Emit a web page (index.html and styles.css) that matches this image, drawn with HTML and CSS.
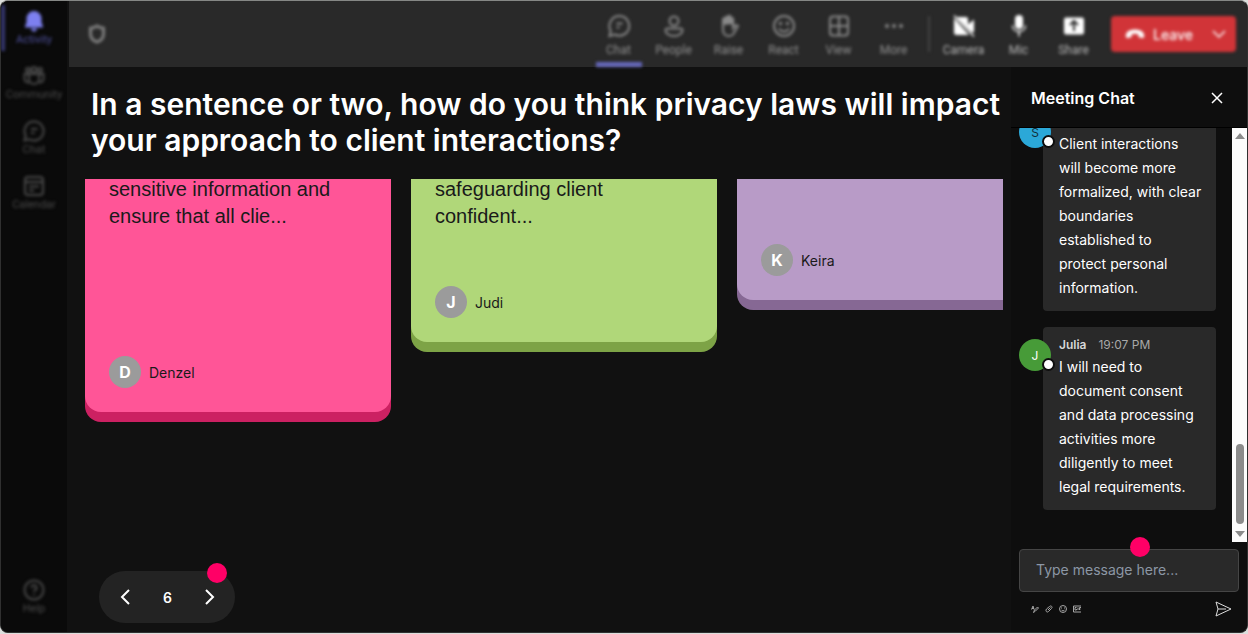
FILE: index.html
```html
<!DOCTYPE html>
<html lang="en">
<head>
  <meta charset="utf-8">
  <title>Meeting</title>
  <link rel="stylesheet" href="styles.css">
</head>
<body>
  <div class="window">
    <nav class="sidebar">
      <a class="nav-item active" href="#">
        <svg width="24" height="24" viewBox="0 0 24 24" fill="currentColor"><path d="M12 2a7.500 7.500 0 0 0-7.500 7.500v4L3 17.200c-.3.800.2 1.300.9 1.300h16.200c.7 0 1.200-.5.900-1.300l-1.500-3.700v-4A7.500 7.500 0 0 0 12 2zM9 19.500a3 3 0 0 0 6 0z"/></svg>
        <span>Activity</span>
      </a>
      <a class="nav-item" href="#">
        <svg width="24" height="24" viewBox="0 0 24 24" fill="none" stroke="currentColor" stroke-width="2"><circle cx="6" cy="6" r="2"/><circle cx="12" cy="5.500" r="2.500"/><circle cx="18" cy="6" r="2"/><path d="M7 10h10v5a5 5 0 0 1-10 0zM7 10H2.500v4.500A4 4 0 0 0 7 18.500M17 10h4.500v4.500a4 4 0 0 1-4.500 4"/></svg>
        <span>Community</span>
      </a>
      <a class="nav-item" href="#">
        <svg width="24" height="24" viewBox="0 0 24 24" fill="none" stroke="currentColor" stroke-width="2"><path d="M12 2.500a9.500 9.500 0 1 1-4.600 17.800L2.500 21.500l1.200-4.900A9.500 9.500 0 0 1 12 2.500zM9 10h6.500M9 14h3.500"/></svg>
        <span>Chat</span>
      </a>
      <a class="nav-item" href="#">
        <svg width="24" height="24" viewBox="0 0 24 24" fill="none" stroke="currentColor" stroke-width="2"><rect x="3" y="3" width="18" height="18" rx="3"/><path d="M3 8h18M7 12.500h10M7 16.500h5"/></svg>
        <span>Calendar</span>
      </a>
      <a class="nav-item help" href="#">
        <svg width="24" height="24" viewBox="0 0 24 24" fill="none" stroke="currentColor" stroke-width="2"><circle cx="12" cy="12" r="9.500"/><path d="M9.500 9.800a2.500 2.500 0 1 1 3.700 2.200c-.8.500-1.200 1-1.200 2M12 16v1.500"/></svg>
        <span>Help</span>
      </a>
    </nav>

    <div class="content">
      <header class="topbar">
        <div class="topbar-inner">
          <svg class="shield" width="20" height="22" viewBox="0 0 20 22" fill="none" stroke="currentColor" stroke-width="3"><path d="M10 3c2 1.300 4 2 6.500 2.200V11c0 4-2.700 6.700-6.500 8-3.800-1.300-6.500-4-6.500-8V5.200C6 5 8 4.300 10 3z"/></svg>
          <div class="tools">
            <button class="tool selected">
              <svg width="24" height="24" viewBox="0 0 24 24" fill="none" stroke="currentColor" stroke-width="2"><path d="M12.500 2a9.800 9.800 0 1 1-4.600 18.500L2.500 22l1.200-5.100A10 10 0 0 1 12.500 2zM9.500 9.500h6M9.500 13.500h3"/></svg>
              <span>Chat</span>
            </button>
            <button class="tool">
              <svg width="24" height="24" viewBox="0 0 24 24" fill="none" stroke="currentColor" stroke-width="2"><circle cx="12" cy="7" r="4.500"/><path d="M5.500 14.500h13c1.200 0 2 .8 2 1.800 0 3-3.500 5.700-8.500 5.700s-8.500-2.700-8.500-5.700c0-1 .8-1.800 2-1.800z"/></svg>
              <span>People</span>
            </button>
            <button class="tool">
              <svg width="24" height="24" viewBox="0 0 24 24" fill="none" stroke="currentColor" stroke-width="2"><path fill="currentColor" d="M6 10V5.500a1.200 1.200 0 0 1 2.500 0V4a1.300 1.300 0 0 1 2.600 0V3a1.300 1.300 0 0 1 2.600 0v2a1.300 1.300 0 0 1 2.500 0v4z"/><path d="M6 10v5.500c0 4 2.500 6.500 6 6.500 3 0 4.500-1.500 5.500-4l3.500-6c-1.500-1.500-3.500-.5-5 2V5"/></svg>
              <span>Raise</span>
            </button>
            <button class="tool">
              <svg width="24" height="24" viewBox="0 0 24 24" fill="none" stroke="currentColor" stroke-width="2"><circle cx="12" cy="12" r="10"/><path d="M7 14.500c2.500 4 7.500 4 10 0"/><circle cx="8.500" cy="9.500" r=".8"/><circle cx="15.500" cy="9.500" r=".8"/></svg>
              <span>React</span>
            </button>
            <button class="tool">
              <svg width="24" height="24" viewBox="0 0 24 24" fill="none" stroke="currentColor" stroke-width="2"><rect x="3" y="2.500" width="18" height="19" rx="3"/><path d="M12 2.500v19M3 12h18"/></svg>
              <span>View</span>
            </button>
            <button class="tool">
              <svg width="24" height="24" viewBox="0 0 24 24" fill="currentColor"><circle cx="5" cy="12" r="2"/><circle cx="12" cy="12" r="2"/><circle cx="19" cy="12" r="2"/></svg>
              <span>More</span>
            </button>
          </div>
          <div class="tools devices">
            <button class="tool">
              <svg width="24" height="24" viewBox="0 0 24 24" fill="currentColor"><path d="M5 3h9a2 2 0 0 1 2 2v5.500l6-5V18l-2 .5L5 3.500zM2 4l15 17H4.500A2.500 2.500 0 0 1 2 18.500z"/><path stroke="currentColor" stroke-width="1.500" d="M2 1.500l20 21"/></svg>
              <span>Camera</span>
            </button>
            <button class="tool">
              <svg width="24" height="24" viewBox="0 0 24 24" fill="currentColor"><rect x="8" y="1" width="8" height="14" rx="4"/><path fill="none" stroke="currentColor" stroke-width="1.500" d="M5.500 11.500c0 8 13 8 13 0M12 18v4.500"/></svg>
              <span>Mic</span>
            </button>
            <button class="tool">
              <svg width="24" height="24" viewBox="0 0 24 24"><rect x="2" y="3.500" width="20" height="17" rx="2" fill="currentColor"/><path fill="none" stroke="#292929" stroke-width="2" d="M12 17V7.500M8 11l4-4 4 4"/></svg>
              <span>Share</span>
            </button>
          </div>
          <button class="leave">
            <svg width="20" height="20" viewBox="0 0 20 20" fill="currentColor"><path d="M.8 11.500C1 7.500 5 5.500 10 5.500s9 2 9.200 6c.1 2-.7 2.700-2 2.500l-2.500-.5c-1-.2-1.400-.8-1.400-1.700v-1.500a10 10 0 0 0-6.600 0v1.500c0 .9-.4 1.500-1.400 1.700L2.800 14c-1.300.2-2.100-.5-2-2.500z"/></svg>
            <span>Leave</span>
            <svg class="chevron" width="14" height="14" viewBox="0 0 14 14" fill="none" stroke="currentColor" stroke-width="1.500"><path d="M1 4l6 6 6-6"/></svg>
          </button>
        </div>
      </header>

      <div class="panes">
        <main class="stage">
          <h1>In a sentence or two, how do you think privacy laws will impact your approach to client interactions?</h1>
          <div class="board">
            <article class="card pink">
              <p>sensitive information and ensure that all clie...</p>
              <div class="author"><span class="initial">D</span>Denzel</div>
            </article>
            <article class="card green">
              <p>safeguarding client confident...</p>
              <div class="author"><span class="initial">J</span>Judi</div>
            </article>
            <article class="card purple">
              <div class="author"><span class="initial">K</span>Keira</div>
            </article>
          </div>
          <div class="pager">
            <button aria-label="Previous"><svg width="12" height="18" viewBox="0 0 12 18" fill="none" stroke="currentColor" stroke-width="2"><path d="M10 2L3 9l7 7"/></svg></button>
            <span class="page">6</span>
            <button aria-label="Next"><svg width="12" height="18" viewBox="0 0 12 18" fill="none" stroke="currentColor" stroke-width="2"><path d="M2 2l7 7-7 7"/></svg></button>
            <span class="hotspot"></span>
          </div>
        </main>

        <aside class="chat">
          <header class="chat-header">
            <h2>Meeting Chat</h2>
            <button aria-label="Close"><svg width="14" height="14" viewBox="0 0 14 14" fill="none" stroke="currentColor" stroke-width="1.500"><path d="M2 2l10 10M12 2L2 12"/></svg></button>
          </header>
          <div class="chat-body">
            <div class="messages">
              <div class="message">
                <span class="avatar blue">S</span>
                <div class="bubble">
                  <div class="meta"></div>
                  <p>Client interactions will become more formalized, with clear boundaries established to protect personal information.</p>
                </div>
              </div>
              <div class="message">
                <span class="avatar leaf">J</span>
                <div class="bubble">
                  <div class="meta"><b>Julia</b><time>19:07 PM</time></div>
                  <p>I will need to document consent and data processing activities more diligently to meet legal requirements.</p>
                </div>
              </div>
            </div>
            <div class="scrollbar">
              <svg width="10" height="6" viewBox="0 0 10 6"><path fill="#8b8b8b" d="M5 0l5 6H0z"/></svg>
              <span class="thumb"></span>
              <svg width="10" height="6" viewBox="0 0 10 6"><path fill="#8b8b8b" d="M0 0h10L5 6z"/></svg>
            </div>
          </div>
          <form class="composer">
            <div class="field">
              <input type="text" aria-label="Message" placeholder="Type message here...">
              <span class="hotspot"></span>
            </div>
            <div class="actions">
              <button type="button" aria-label="Format"><svg width="8" height="8" viewBox="0 0 16 16" fill="none" stroke="currentColor" stroke-width="2"><path d="M1 9l3-7 2 7M2 7h4M5 15l2-5 6-6 2 2-6 6z"/></svg></button>
              <button type="button" aria-label="Attach"><svg width="8" height="8" viewBox="0 0 16 16" fill="none" stroke="currentColor" stroke-width="2"><path d="M3 8l6-5c3-3 7 1 4 4l-6 6c-3 3-7-1-4-5zM6 10l5-5"/></svg></button>
              <button type="button" aria-label="Emoji"><svg width="8" height="8" viewBox="0 0 16 16" fill="none" stroke="currentColor" stroke-width="2"><circle cx="8" cy="8" r="7"/><path d="M4.500 9.500c2 3 5 3 7 0M5 5v2M11 5v2"/></svg></button>
              <button type="button" aria-label="GIF"><svg width="8" height="8" viewBox="0 0 16 16" fill="none" stroke="currentColor" stroke-width="2"><path d="M16 2H1v12h15M7 5H4v5h3V8M10 5v5M16 5h-3v5M12 8h3"/></svg></button>
              <button class="send" type="submit" aria-label="Send"><svg width="18" height="18" viewBox="0 0 18 18" fill="none" stroke="currentColor" stroke-width="1"><path d="M2 2l15 7-15 7 2-7zM4 9h8"/></svg></button>
            </div>
          </form>
        </aside>
      </div>
    </div>
  </div>
</body>
</html>
```
FILE: styles.css
```css
*,
*::after {
  box-sizing: border-box;
}

body {
  margin: 0;
  height: 100vh;
  padding-bottom: 1px;
  background-color: #dcdedc;
  color: #ffffff;
  font-family: Inter, "Liberation Sans", sans-serif;
}

h1, h2, p {
  margin: 0;
}

button {
  padding: 0;
  border: none;
  background: none;
  color: inherit;
  font: inherit;
  cursor: pointer;
}

svg {
  display: block;
}

.window {
  display: flex;
  height: 100%;
  background-color: #111111;
  border: 1px solid #303030;
  border-top-color: #858785;
  border-radius: 8px;
  overflow: hidden;
}

/* Sidebar */
.sidebar {
  flex: 0 0 66px;
  display: flex;
  flex-direction: column;
  gap: 9px;
  padding: 4px 0 12px;
  background-color: #0a0a0a;
}

.nav-item {
  display: flex;
  flex-direction: column;
  align-items: center;
  justify-content: center;
  height: 46px;
  color: #4a4a4a;
  font-family: Roboto, sans-serif;
  font-size: 11px;
  line-height: 14px;
  text-decoration: none;
  filter: blur(1px) blur(1px);
}

.nav-item.active {
  color: #4e509c;
  border-left: 4px solid #35376f;
  padding-right: 4px;
}

.nav-item.active svg {
  color: #7d80f0;
}

.nav-item.help {
  margin-top: auto;
}

.content {
  flex: 1;
  min-width: 0;
  display: flex;
  flex-direction: column;
}

/* Top bar */
.topbar {
  margin-left: 2px;
  background-color: #292929;
}

.topbar-inner {
  display: flex;
  align-items: center;
  height: 66px;
  padding: 0 11px 0 18px;
  filter: blur(1px) blur(1px);
}

.shield {
  color: #808080;
}

.tools {
  display: flex;
  margin-left: auto;
  color: #8a8a8a;
}

.devices {
  margin-left: 7px;
  padding-left: 8px;
  background: linear-gradient(#444444, #444444) left center / 2px 36px no-repeat;
  color: #ffffff;
}

.tool {
  display: flex;
  flex-direction: column;
  align-items: center;
  width: 55px;
  height: 66px;
  padding-top: 13px;
  font-family: Roboto, sans-serif;
  font-size: 12px;
  line-height: 24px;
}

.tool span {
  color: #909090;
}

.devices .tool span {
  color: #b5b5b5;
}

.tool.selected {
  background: linear-gradient(#6668bc, #6668bc) center bottom / 46px 5px no-repeat;
}

.leave {
  display: flex;
  align-items: center;
  gap: 8px;
  width: 125px;
  height: 36px;
  margin-left: 10px;
  padding: 0 10px 0 14px;
  background-color: #d13438;
  border-radius: 4px;
  font-size: 14px;
  font-weight: 500;
}

.chevron {
  margin-left: auto;
}

.panes {
  flex: 1;
  min-height: 0;
  display: flex;
}

/* Question and answer cards */
.stage {
  flex: 1;
  min-width: 0;
  display: flex;
  flex-direction: column;
  padding: 19px 8px 9px 18px;
}

h1 {
  padding-left: 6px;
  font-size: 30px;
  font-weight: 600;
  line-height: 36px;
}

.board {
  flex: 1;
  display: grid;
  grid-auto-flow: column;
  grid-auto-columns: 306px;
  align-items: start;
  gap: 20px;
  margin-top: 21px;
  overflow: hidden;
}

.card {
  display: flex;
  flex-direction: column;
  padding: 0 24px 24px;
  border-radius: 0 0 16px 16px;
  color: #1a1a1a;
}

.card p {
  margin-top: -3px;
  font-family: "Liberation Sans", Arial, sans-serif;
  font-size: 20px;
  line-height: 27px;
}

.pink {
  min-height: 233px;
  margin-bottom: 10px;
  background-color: #ff5597;
  box-shadow: 0 10px 0 #cc2162;
}

.green {
  min-height: 163px;
  background-color: #b0d779;
  box-shadow: 0 10px 0 #7da346;
}

.purple {
  min-height: 121px;
  background-color: #b89bc7;
  box-shadow: 0 10px 0 #866894;
}

.author {
  display: flex;
  align-items: center;
  gap: 8px;
  margin-top: auto;
  font-size: 14px;
}

.initial {
  display: grid;
  place-items: center;
  width: 32px;
  height: 32px;
  border-radius: 50%;
  background-color: #9b9b9b;
  color: #ffffff;
  font-size: 16px;
  font-weight: 700;
}

.pager {
  position: relative;
  align-self: flex-start;
  display: flex;
  align-items: center;
  justify-content: space-between;
  width: 136px;
  height: 52px;
  margin-left: 14px;
  padding: 0 19px 0 20px;
  border-radius: 26px;
  background-color: #232323;
}

.page {
  font-size: 14px;
  font-weight: 600;
}

.hotspot {
  position: absolute;
  width: 20px;
  height: 20px;
  border-radius: 50%;
  background-color: #ff0066;
}

.pager .hotspot {
  top: -8px;
  right: 8px;
}

/* Meeting chat */
.chat {
  flex: 0 0 236px;
  display: flex;
  flex-direction: column;
  background-color: #0e0e0e;
}

.chat-header {
  display: flex;
  align-items: center;
  justify-content: space-between;
  height: 61px;
  padding: 2px 23px 0 20px;
  border-bottom: 1px solid #000000;
}

.chat-header h2 {
  font-size: 16px;
  font-weight: 600;
}

.chat-body {
  flex: 1;
  min-height: 0;
  display: flex;
}

.messages {
  flex: 1;
  display: flex;
  flex-direction: column;
  justify-content: flex-end;
  gap: 16px;
  padding: 0 16px 32px 8px;
  overflow: hidden;
}

.message {
  position: relative;
  display: flex;
  align-items: flex-start;
}

.avatar {
  position: relative;
  flex: none;
  display: grid;
  place-items: center;
  width: 32px;
  height: 32px;
  margin: 12px -8px 0 0;
  border-radius: 50%;
  font-size: 12px;
  z-index: 1;
}

/* presence dot */
.avatar::after {
  content: "";
  position: absolute;
  right: -4px;
  bottom: 0;
  width: 13px;
  height: 13px;
  border: 2px solid #0e0e0e;
  border-radius: 50%;
  background-color: #ffffff;
}

.blue {
  background-color: #2ba8d8;
  color: #12303c;
}

.leaf {
  background-color: #479b38;
}

.bubble {
  flex: 1;
  padding: 8px 14px 11px 16px;
  border-radius: 4px;
  background-color: #292929;
}

.meta {
  display: flex;
  gap: 12px;
  height: 20px;
  color: #a8a8a8;
  font-size: 12px;
  line-height: 20px;
}

.meta b {
  color: #d6d6d6;
  font-weight: 600;
}

.bubble p {
  font-size: 14px;
  line-height: 24px;
}

.scrollbar {
  flex: 0 0 15px;
  display: flex;
  flex-direction: column;
  align-items: center;
  padding: 5px 0;
  background-color: #fcfcfc;
}

.thumb {
  width: 8px;
  height: 80px;
  margin: auto 0 7px;
  border-radius: 4px;
  background-color: #8b8b8b;
}

.composer {
  padding: 7px 8px 14px;
}

.field {
  position: relative;
}

.field input {
  display: block;
  width: 100%;
  height: 43px;
  padding: 0 16px 2px;
  border: 1px solid #454545;
  border-radius: 4px;
  background-color: #292929;
  color: #ffffff;
  font: inherit;
  font-size: 14px;
}

.field input::placeholder {
  color: #8c97a5;
}

.field .hotspot {
  top: -12px;
  left: calc(50% + 1px);
}

.actions {
  display: flex;
  align-items: center;
  gap: 6px;
  margin-top: 8px;
  padding: 0 7px 0 12px;
  color: #a5a5a5;
}

.send {
  margin-left: auto;
  color: #dddddd;
}
```
